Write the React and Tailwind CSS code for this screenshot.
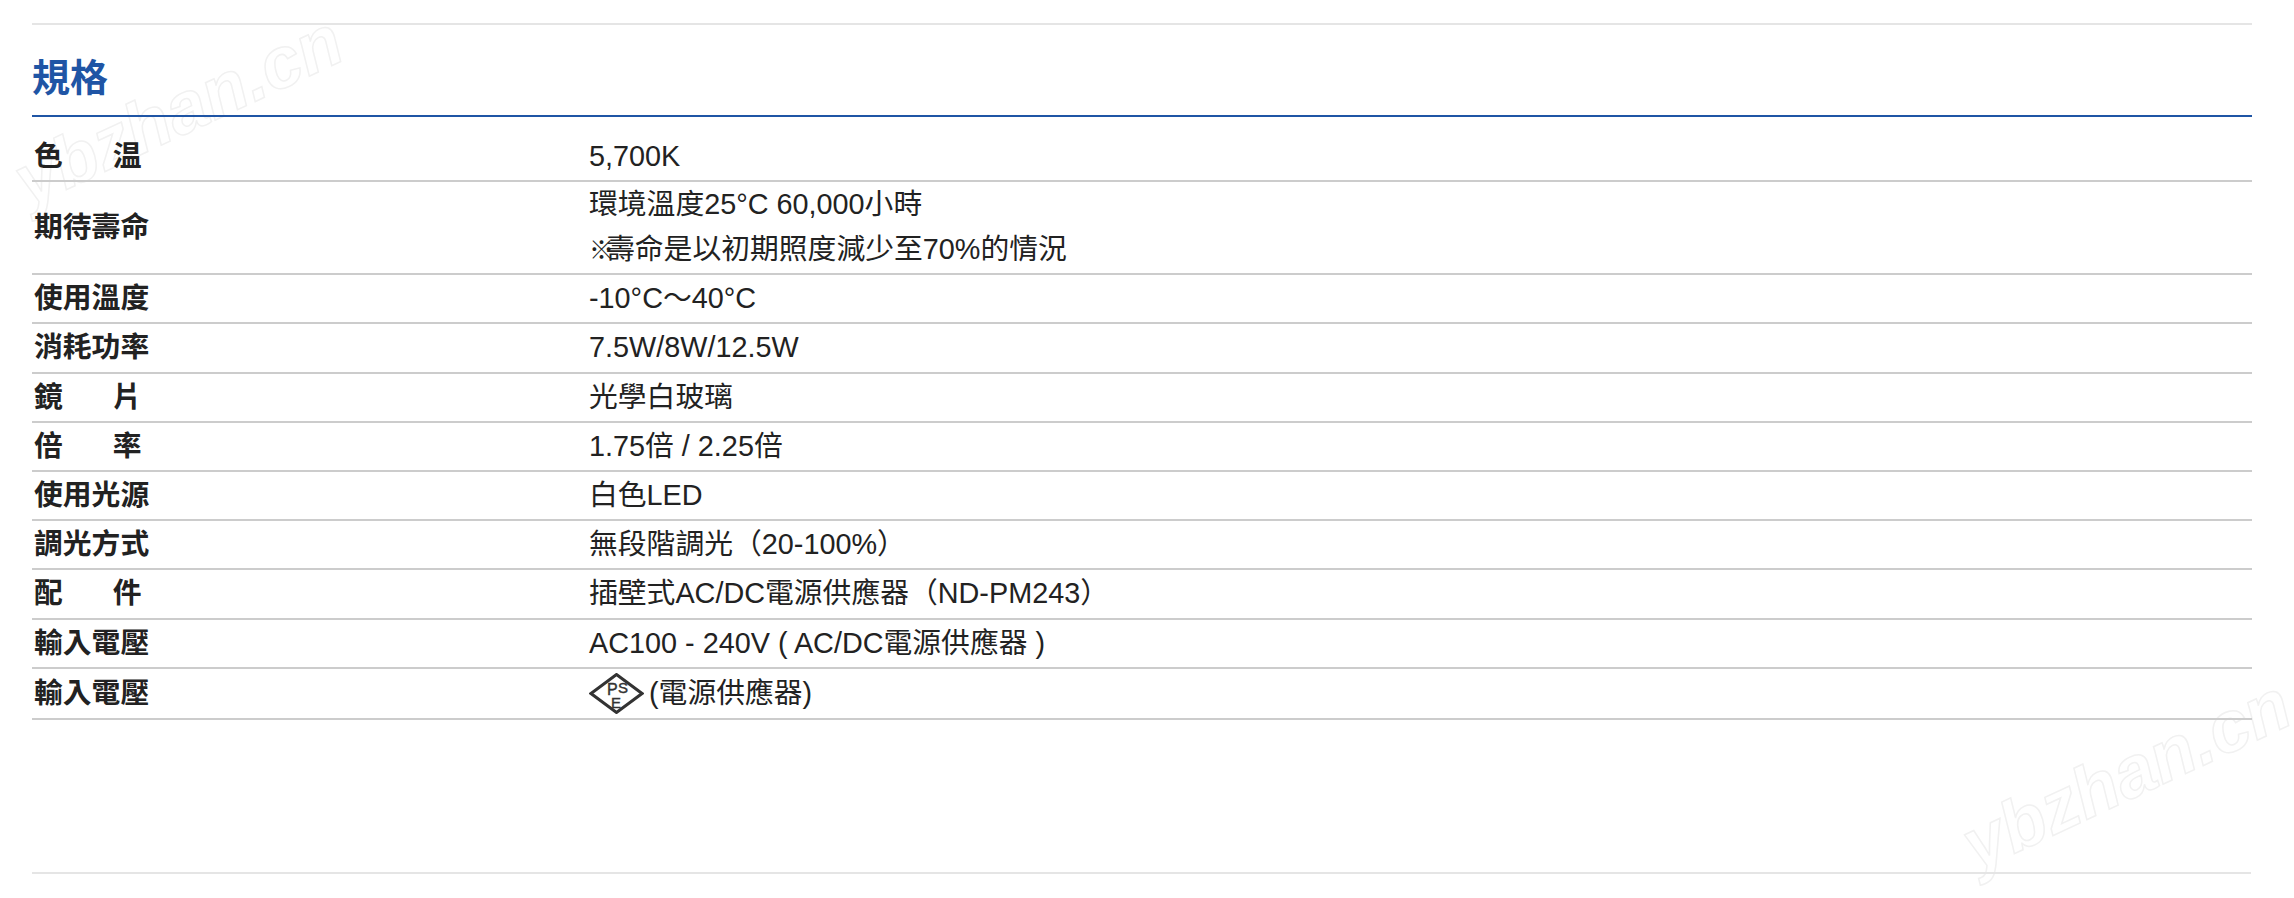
const specs = [
  { label: ['色', '温'], value: ['5,700K'] },
  { label: '期待壽命', value: ['環境溫度25°C 60,000小時', <><span className="text-[25px] font-bold tracking-[-8px]">※</span>壽命是以初期照度減少至70%的情況</>] },
  { label: '使用溫度', value: ['-10°C～40°C'] },
  { label: '消耗功率', value: ['7.5W/8W/12.5W'] },
  { label: ['鏡', '片'], value: ['光學白玻璃'] },
  { label: ['倍', '率'], value: ['1.75倍 / 2.25倍'] },
  { label: '使用光源', value: ['白色LED'] },
  { label: '調光方式', value: ['無段階調光（20-100%）'] },
  { label: ['配', '件'], value: ['插壁式AC/DC電源供應器（ND-PM243）'] },
  { label: '輸入電壓', value: ['AC100 - 240V ( AC/DC電源供應器 )'] },
];

const PseMark = () => (
  <svg width="55" height="41" viewBox="0 0 55 41" className="shrink-0">
    <path d="M2 20.5 L27.5 1.5 L53 20.5 L27.5 39.5 Z" fill="none" stroke="#333" strokeWidth="3" />
    <text x="18" y="22" fontSize="16" fill="#333" stroke="#333" strokeWidth="0.4" fontFamily="Liberation Sans, sans-serif">P</text>
    <text x="29" y="20" fontSize="15" fill="#333" stroke="#333" strokeWidth="0.4" fontFamily="Liberation Sans, sans-serif">S</text>
    <text x="22" y="35" fontSize="15" fill="#333" stroke="#333" strokeWidth="0.4" fontFamily="Liberation Sans, sans-serif">E</text>
  </svg>
);

const Watermark = ({ className }) => (
  <div className={`absolute text-[72px] leading-none italic font-bold text-transparent [-webkit-text-stroke:1.5px_#f1f1f1] rotate-[-25deg] pointer-events-none whitespace-nowrap ${className}`}>
    ybzhan.cn
  </div>
);

const Row = ({ label, children, className = 'min-h-[49.2px]' }) => (
  <div className={`flex items-center border-b-2 border-[#cccccc] ${className}`}>
    <div className="w-[557px] shrink-0 pl-[2px] font-bold">
      {Array.isArray(label) ? (
        <div className="flex gap-[50px]">
          <span>{label[0]}</span>
          <span>{label[1]}</span>
        </div>
      ) : (
        label
      )}
    </div>
    <div>{children}</div>
  </div>
);

const App = () => {
  return (
    <div className="relative h-[898px] overflow-hidden bg-white pt-[23px] pl-[32px] text-[28.8px] text-[#222222] font-['Liberation_Sans','Noto_Sans_CJK_TC',sans-serif]">
      <Watermark className="left-[2px] top-[74px]" />
      <Watermark className="left-[1950px] top-[738px]" />

      <div className="relative w-[2220px]">
        <div className="border-t-2 border-[#e5e5e5]" />
        <h2 className="flex h-[90px] items-end pb-[18px] text-[38px] font-bold leading-none text-[#1f55a5]">規格</h2>
        <div className="border-t-2 border-[#1f55a5]" />

        <div className="mt-[16px]">
          {specs.map((spec, i) => (
            <Row key={i} label={spec.label}>
              {spec.value.map((line, j) => (
                <div key={j} className="leading-[45px]">{line}</div>
              ))}
            </Row>
          ))}
          <Row label="輸入電壓" className="h-[51px]">
            <div className="flex items-center gap-[5px]">
              <PseMark />
              <span>(電源供應器)</span>
            </div>
          </Row>
        </div>

        <div className="mt-[152px] w-[2219px] border-t-2 border-[#e5e5e5]" />
      </div>
    </div>
  );
};

export default App;
